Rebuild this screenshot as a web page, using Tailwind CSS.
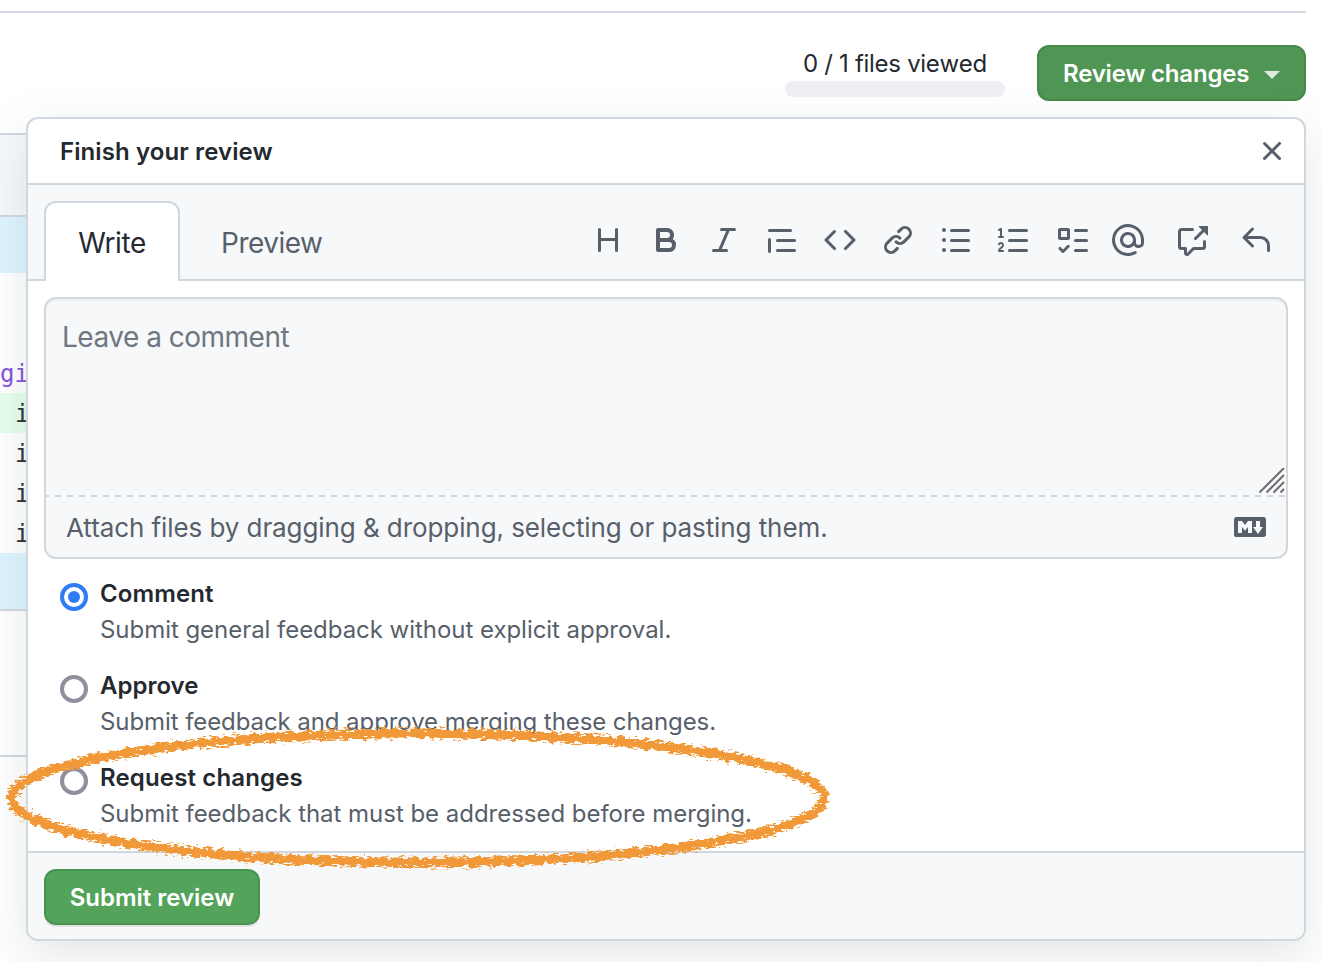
<!DOCTYPE html>
<html lang="en"><head><meta charset="utf-8"><title>Finish your review</title>
<script src="https://cdn.jsdelivr.net/npm/@tailwindcss/browser@4"></script></head>
<body class="relative h-[962px] w-[1322px] overflow-hidden bg-white font-['Inter',sans-serif] text-[#24292f]">
<!-- page behind the dialog -->
<div class="flex h-full flex-col">
  <div class="mr-4 mt-[11px] flex h-[122px] items-start justify-end border-t-2 border-[#d0d7de] pt-8">
    <div class="mr-8 flex w-[220px] flex-col items-center">
      <span class="mt-[3px] h-[33px] text-[24px] leading-[32px] tracking-[-0.3px] [font-kerning:none]">0 / 1 files viewed</span>
      <span class="h-4 w-full rounded-lg bg-[#eeeff2]"></span>
    </div>
    <button class="flex h-14 w-[269px] items-center rounded-xl border-2 border-[#46874b] bg-[#4f9654] pl-6 pt-0.5 text-[24px] font-semibold text-white"><span class="tracking-[-0.2px]">Review changes</span><span class="ml-[15px] mt-0.5 border-x-8 border-t-8 border-x-transparent border-t-white/80"></span></button>
  </div>
  <div class="w-20 font-['DejaVu_Sans_Mono',monospace] text-[24px] leading-[42px]">
    <div class="h-[84px] border-y-2 border-[#d0d7de] bg-[#f6f8fa]"></div>
    <div class="h-14 bg-[#ddf4ff]"></div>
    <div class="h-20"></div>
    <div class="h-10 text-[#8250df]">gi</div>
    <div class="h-10 bg-[#e6ffec] pl-[15px]">i</div>
    <div class="h-10 pl-[15px]">i</div>
    <div class="h-10 pl-[15px]">i</div>
    <div class="h-10 pl-[15px]">i</div>
    <div class="h-[58px] border-b-2 border-[#d0d7de] bg-[#ddf4ff]"></div>
    <div class="h-[146px] border-b-2 border-[#d0d7de]"></div>
  </div>
</div>
<!-- review dialog -->
<section class="absolute left-[26px] top-[117px] flex h-[824px] w-[1280px] flex-col overflow-hidden rounded-xl border-2 border-[#d0d7de] bg-white shadow-[0_16px_48px_rgba(130,140,140,0.22)]">
  <header class="flex h-[66px] shrink-0 items-center justify-between border-b-2 border-[#d0d7de] pl-8 pr-4">
    <h1 class="pt-0.5 text-[24px] font-semibold tracking-[0.1px]">Finish your review</h1>
    <svg class="size-8 fill-[#57606a]" viewBox="0 0 16 16"><path d="M3.72 3.72a.75.75 0 0 1 1.06 0L8 6.94l3.22-3.22a.75.75 0 1 1 1.06 1.06L9.06 8l3.22 3.22a.75.75 0 1 1-1.06 1.06L8 9.06l-3.22 3.22a.75.75 0 0 1-1.06-1.06L6.94 8 3.72 4.78a.75.75 0 0 1 0-1.06Z"/></svg>
  </header>
  <div class="flex h-24 shrink-0 border-b-2 border-[#d0d7de] bg-[#f6f8fa] pl-4 text-[28px]">
    <div class="mt-4 flex h-20 w-[136px] items-center justify-center rounded-t-xl border-2 border-b-0 border-[#d0d7de] bg-white pt-0.5 tracking-[-0.4px]">Write</div>
    <div class="ml-[41px] mt-5 flex h-[76px] items-center tracking-[-0.5px] text-[#57606a]">Preview</div>
    <div class="ml-auto mr-4 mt-[39px] flex h-8 [&>svg]:size-8 [&>svg]:fill-[#57606a]">
      <svg class="mr-[26px]" viewBox="0 0 16 16"><path d="M3.75 2a.75.75 0 0 1 .75.75V7h7V2.75a.75.75 0 0 1 1.5 0v10.5a.75.75 0 0 1-1.5 0V8.5h-7v4.75a.75.75 0 0 1-1.5 0V2.75A.75.75 0 0 1 3.75 2Z"/></svg>
      <svg class="mr-[26px]" viewBox="0 0 16 16"><path d="M4 2a1 1 0 0 0-1 1v10a1 1 0 0 0 1 1h5.5a3.5 3.5 0 0 0 1.852-6.47A3.5 3.5 0 0 0 8.5 2H4Zm4.5 5a1.5 1.5 0 1 0 0-3H5v3h3.5ZM5 9v3h4.5a1.5 1.5 0 0 0 0-3H5Z" fill-rule="evenodd"/></svg>
      <svg class="mr-[26px]" viewBox="0 0 16 16"><path d="M6 2.75A.75.75 0 0 1 6.75 2h6.5a.75.75 0 0 1 0 1.5h-2.505l-3.858 9H9.25a.75.75 0 0 1 0 1.5h-6.5a.75.75 0 0 1 0-1.5h2.505l3.858-9H6.75A.75.75 0 0 1 6 2.75Z"/></svg>
      <svg class="mr-[26px]" viewBox="0 0 16 16"><path d="M1.75 2.5a.75.75 0 0 0 0 1.5h10.5a.75.75 0 0 0 0-1.5H1.75Zm4 5a.75.75 0 0 0 0 1.5h8.5a.75.75 0 0 0 0-1.5h-8.5Zm0 5a.75.75 0 0 0 0 1.5h8.5a.75.75 0 0 0 0-1.5h-8.5ZM2.5 7.75a.75.75 0 0 0-1.5 0v6a.75.75 0 0 0 1.5 0v-6Z"/></svg>
      <svg class="mr-[26px]" viewBox="0 0 16 16"><path d="M4.72 3.22a.75.75 0 0 1 1.06 1.06L2.06 8l3.72 3.72a.75.75 0 1 1-1.06 1.06L.47 8.53a.75.75 0 0 1 0-1.06l4.25-4.25Zm6.56 0a.75.75 0 1 0-1.06 1.06L13.94 8l-3.72 3.72a.75.75 0 1 0 1.06 1.06l4.25-4.25a.75.75 0 0 0 0-1.06l-4.25-4.25Z"/></svg>
      <svg class="mr-[26px]" viewBox="0 0 16 16"><path d="M7.775 3.275a.75.75 0 0 0 1.06 1.06l1.25-1.25a2 2 0 1 1 2.83 2.83l-2.5 2.5a2 2 0 0 1-2.83 0 .75.75 0 0 0-1.06 1.06 3.5 3.5 0 0 0 4.95 0l2.5-2.5a3.5 3.5 0 0 0-4.95-4.95l-1.25 1.25Zm-4.69 9.64a2 2 0 0 1 0-2.83l2.5-2.5a2 2 0 0 1 2.83 0 .75.75 0 0 0 1.06-1.06 3.5 3.5 0 0 0-4.95 0l-2.5 2.5a3.5 3.5 0 0 0 4.95 4.95l1.25-1.25a.75.75 0 0 0-1.06-1.06l-1.25 1.25a2 2 0 0 1-2.83 0Z"/></svg>
      <svg class="mr-[26px]" viewBox="0 0 16 16"><path d="M2 4a1 1 0 1 0 0-2 1 1 0 0 0 0 2Zm3.75-1.5a.75.75 0 0 0 0 1.5h8.5a.75.75 0 0 0 0-1.5h-8.5Zm0 5a.75.75 0 0 0 0 1.5h8.5a.75.75 0 0 0 0-1.5h-8.5Zm0 5a.75.75 0 0 0 0 1.5h8.5a.75.75 0 0 0 0-1.5h-8.5ZM3 8a1 1 0 1 1-2 0 1 1 0 0 1 2 0Zm-1 6a1 1 0 1 0 0-2 1 1 0 0 0 0 2Z"/></svg>
      <svg class="mr-[26px]" viewBox="0 0 16 16"><path d="M2.003 2.5a.5.5 0 0 0-.723-.447l-1.003.5a.5.5 0 0 0 .446.895l.28-.14V6H.5a.5.5 0 0 0 0 1h2.006a.5.5 0 1 0 0-1h-.503V2.5ZM5 3.25a.75.75 0 0 1 .75-.75h8.5a.75.75 0 0 1 0 1.5h-8.5A.75.75 0 0 1 5 3.25Zm0 5a.75.75 0 0 1 .75-.75h8.5a.75.75 0 0 1 0 1.5h-8.5A.75.75 0 0 1 5 8.25Zm0 5a.75.75 0 0 1 .75-.75h8.5a.75.75 0 0 1 0 1.5h-8.5a.75.75 0 0 1-.75-.75ZM.924 10.32l.003-.004a.851.851 0 0 1 .144-.153A.66.66 0 0 1 1.5 10c.195 0 .306.068.374.146a.57.57 0 0 1 .128.376c0 .453-.269.682-.8 1.078l-.035.025C.692 11.98 0 12.495 0 13.5a.5.5 0 0 0 .5.5h2.003a.5.5 0 0 0 0-1H1.146c.132-.197.351-.372.654-.597l.047-.035c.47-.35 1.156-.858 1.156-1.845 0-.365-.118-.744-.377-1.038-.268-.303-.658-.484-1.126-.484-.48 0-.84.202-1.068.392a1.858 1.858 0 0 0-.348.384l-.01.018a.5.5 0 0 0 .851.525Z"/></svg>
      <svg class="mr-6" viewBox="0 0 16 16"><path fill-rule="evenodd" d="M2.5 3.5v3h3v-3h-3ZM2 2a1 1 0 0 0-1 1v4a1 1 0 0 0 1 1h4a1 1 0 0 0 1-1V3a1 1 0 0 0-1-1H2Zm4.655 8.595a.75.75 0 0 1 0 1.06L4.03 14.28a.75.75 0 0 1-1.06 0l-1.5-1.5a.75.75 0 1 1 1.06-1.06l.97.97 2.095-2.095a.75.75 0 0 1 1.06 0ZM9.75 2.5a.75.75 0 0 0 0 1.5h5.5a.75.75 0 0 0 0-1.5h-5.5Zm0 5a.75.75 0 0 0 0 1.5h5.5a.75.75 0 0 0 0-1.5h-5.5Zm0 5a.75.75 0 0 0 0 1.5h5.5a.75.75 0 0 0 0-1.5h-5.5Z"/></svg>
      <svg class="mr-8" viewBox="0 0 16 16"><path fill-rule="evenodd" d="M4.75 2.37a6.5 6.5 0 0 0 6.5 11.26.75.75 0 0 1 .75 1.298 8 8 0 1 1 3.994-7.273.754.754 0 0 1 .006.095v1.5a2.75 2.75 0 0 1-5.072 1.475A4 4 0 1 1 12 8v1.25a1.25 1.25 0 0 0 2.5 0V7.867a6.5 6.5 0 0 0-9.75-5.496V2.37ZM10.5 8a2.5 2.5 0 1 0-5 0 2.5 2.5 0 0 0 5 0Z"/></svg>
      <svg class="mr-8" viewBox="0 0 16 16"><path d="M16 1.25v4.146a.25.25 0 0 1-.427.177L14.03 4.03l-3.75 3.75a.749.749 0 1 1-1.06-1.06l3.75-3.75-1.543-1.543A.25.25 0 0 1 11.604 1h4.146a.25.25 0 0 1 .25.25ZM2.75 3.5a.25.25 0 0 0-.25.25v7.5c0 .138.112.25.25.25h2a.75.75 0 0 1 .75.75v2.19l2.72-2.72a.749.749 0 0 1 .53-.22h4.5a.25.25 0 0 0 .25-.25v-2.5a.75.75 0 0 1 1.5 0v2.5A1.75 1.75 0 0 1 13.25 13H9.06l-2.573 2.573A1.457 1.457 0 0 1 4 14.543V13H2.75A1.75 1.75 0 0 1 1 11.25v-7.5C1 2.784 1.784 2 2.75 2h5.5a.75.75 0 0 1 0 1.5Z"/></svg>
      <svg class="mr-4" viewBox="0 0 16 16"><path d="M6.78 1.97a.75.75 0 0 1 0 1.06L3.81 6h6.44A4.75 4.75 0 0 1 15 10.75v2.5a.75.75 0 0 1-1.5 0v-2.5a3.25 3.25 0 0 0-3.25-3.25H3.81l2.97 2.97a.749.749 0 1 1-1.06 1.06L1.47 7.28a.75.75 0 0 1 0-1.06l4.25-4.25a.75.75 0 0 1 1.06 0Z"/></svg>
    </div>
  </div>
  <!-- comment field -->
  <div class="mx-4 mt-4 flex h-[262px] shrink-0 flex-col overflow-hidden rounded-xl border-2 border-[#d0d7de] bg-[#f6f8fa] shadow-[inset_0_2px_0_rgba(208,215,222,0.25)]">
    <div class="flex h-[196px] shrink-0 items-start justify-between pl-4">
      <p class="mt-[17px] text-[28px] leading-[42px] tracking-[-0.5px] text-[#6e7781]">Leave a comment</p>
      <svg class="mb-px mr-px h-[26px] w-[26px] self-end" viewBox="0 0 26 26" fill="none" stroke="#6d6e70" stroke-width="2"><path d="M0.5 24.500 25 0M7.500 24.500 25 7M14.500 24.500 25 14M21.500 24.500 25 21"/></svg>
    </div>
    <div class="h-0.5 shrink-0 bg-[repeating-linear-gradient(90deg,#d0d7de_0_3px,transparent_3px_9px,#d0d7de_9px_12px)]"></div>
    <div class="flex h-[60px] items-center justify-between pl-5 pr-5 text-[26px] tracking-[-0.08px] text-[#57606a]">
      <span>Attach files by dragging &amp; dropping, selecting or pasting them.</span>
      <svg class="size-8" viewBox="0 0 16 16" fill="#57606a"><path d="M14.85 3c.63 0 1.15.52 1.14 1.15v7.7c0 .63-.51 1.15-1.15 1.15H1.15C.52 13 0 12.48 0 11.84V4.15C0 3.52.52 3 1.15 3ZM9 11V5H7L5.500 7 4 5H2v6h2V8l1.500 1.920L7 8v3Zm2.990.500L14.500 8H13V5h-2v3H9.500Z"/></svg>
    </div>
  </div>
  <!-- verdict options -->
  <div class="flex h-[292px] shrink-0 flex-col pl-8 pt-[17px]">
    <label class="flex h-[92px] shrink-0 gap-3"><span class="mt-[7px] flex size-7 items-center justify-center rounded-full border-4 border-[#2f7cf6]"><span class="size-3 rounded-full bg-[#2f7cf6]"></span></span>
      <span class="flex flex-col text-[24px] leading-9"><b class="font-semibold tracking-[0.1px]">Comment</b><span class="tracking-[-0.04px] text-[#57606a]">Submit general feedback without explicit approval.</span></span></label>
    <label class="flex h-[92px] shrink-0 gap-3"><span class="mt-[7px] size-7 rounded-full border-4 border-[#8f8f9d]"></span>
      <span class="flex flex-col text-[24px] leading-9"><b class="font-semibold">Approve</b><span class="tracking-[-0.08px] text-[#57606a]">Submit feedback and approve merging these changes.</span></span></label>
    <label class="flex h-[92px] shrink-0 gap-3"><span class="mt-[7px] size-7 rounded-full border-4 border-[#8f8f9d]"></span>
      <span class="flex flex-col text-[24px] leading-9"><b class="font-semibold tracking-[0.15px]">Request changes</b><span class="tracking-[-0.03px] text-[#57606a]">Submit feedback that must be addressed before merging.</span></span></label>
  </div>
  <footer class="flex grow items-start border-t-2 border-[#d0d7de] bg-[#f6f8fa] pl-4 pt-4">
    <button class="h-14 w-[216px] rounded-xl border-2 border-[#4a924f] bg-[#54a35a] pt-0.5 text-[24px] font-semibold tracking-[-0.02px] text-white shadow-[0_2px_0_rgba(27,31,36,0.1)]">Submit review</button>
  </footer>
</section>
<!-- crayon ring around the last option -->
<svg class="absolute left-0 top-[715px] h-[170px] w-[850px]" viewBox="0 715 850 170" fill="none">
  <filter id="crayon" filterUnits="userSpaceOnUse" x="0" y="715" width="850" height="170">
    <feTurbulence type="fractalNoise" baseFrequency="0.16 0.45" numOctaves="4" seed="7" result="n"/>
    <feDisplacementMap in="SourceGraphic" in2="n" scale="11" xChannelSelector="R" yChannelSelector="G"/>
  </filter>
  <ellipse cx="418" cy="798" rx="406.500" ry="64.500" stroke="#f19937" stroke-width="9.500" filter="url(#crayon)"/>
</svg>
</body></html>
